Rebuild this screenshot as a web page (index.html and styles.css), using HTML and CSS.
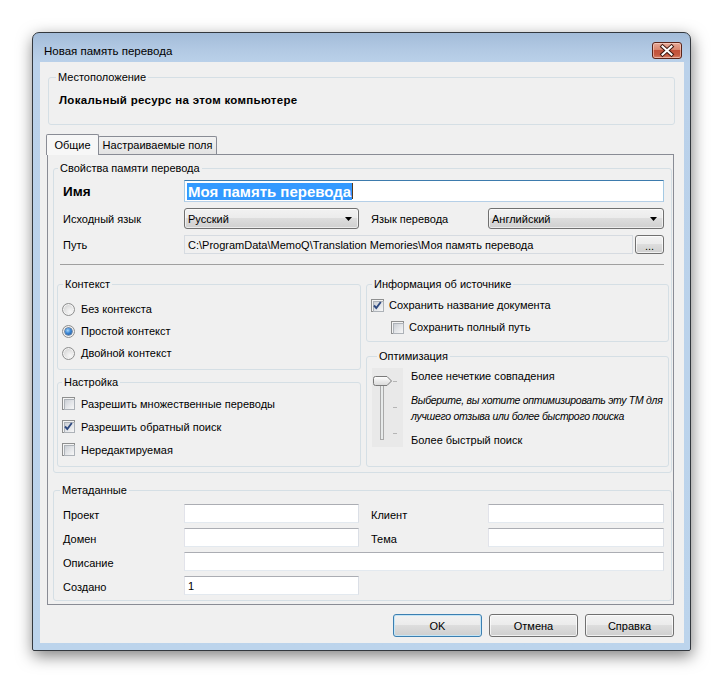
FILE: index.html
```html
<!DOCTYPE html>
<html lang="ru">
<head>
<meta charset="utf-8">
<title>Новая память перевода</title>
<link rel="stylesheet" href="styles.css">
</head>
<body>
<div class="window">
  <div class="titlebar">
    <span class="title">Новая память перевода</span>
    <div class="close">
      <svg width="28" height="15" viewBox="0 0 28 15">
        <path d="M9.5 3.5 L18.5 11.5 M18.5 3.5 L9.5 11.5" stroke="#3d1810" stroke-width="4" stroke-linecap="square"/>
        <path d="M9.5 3.5 L18.5 11.5 M18.5 3.5 L9.5 11.5" stroke="#ffffff" stroke-width="2" stroke-linecap="square"/>
      </svg>
    </div>
  </div>
  <div class="client">
    <fieldset class="group loc">
      <legend>Местоположение</legend>
      <div class="loc-text">Локальный ресурс на этом компьютере</div>
    </fieldset>

    <div class="tabs">
      <div class="tab active">Общие</div>
      <div class="tab">Настраиваемые поля</div>
    </div>

    <div class="panel">
      <fieldset class="group props">
        <legend>Свойства памяти перевода</legend>
        <div class="form">
          <div class="lbl name-lbl">Имя</div>
          <div class="input name-input span4"><span class="sel">Моя память перевода</span><span class="caret"></span></div>

          <div class="lbl">Исходный язык</div>
          <div class="combo"><span>Русский</span><svg class="arrow" width="7" height="4" viewBox="0 0 7 4"><path d="M0 0 H7 L3.5 4 Z" fill="#000"/></svg></div>
          <div class="lbl lbl2">Язык перевода</div>
          <div class="combo"><span>Английский</span><svg class="arrow" width="7" height="4" viewBox="0 0 7 4"><path d="M0 0 H7 L3.5 4 Z" fill="#000"/></svg></div>

          <div class="lbl">Путь</div>
          <div class="path-row span4">
            <div class="input path">C:\ProgramData\MemoQ\Translation Memories\Моя память перевода</div>
            <div class="btn dots">...</div>
          </div>
        </div>
        <div class="sep"></div>
        <div class="cols">
          <div class="col">
            <fieldset class="group ctx">
              <legend>Контекст</legend>
              <div class="opt"><span class="radio"></span>Без контекста</div>
              <div class="opt"><span class="radio on"></span>Простой контекст</div>
              <div class="opt"><span class="radio"></span>Двойной контекст</div>
            </fieldset>
            <fieldset class="group settings">
              <legend>Настройка</legend>
              <div class="opt"><span class="cb"></span>Разрешить множественные переводы</div>
              <div class="opt"><span class="cb on"><svg width="13" height="13" viewBox="0 0 13 13"><path d="M3 6.5 L5.3 9 L9.8 3" fill="none" stroke="#2f4a80" stroke-width="1.9"/></svg></span>Разрешить обратный поиск</div>
              <div class="opt"><span class="cb"></span>Нередактируемая</div>
            </fieldset>
          </div>
          <div class="col">
            <fieldset class="group info">
              <legend>Информация об источнике</legend>
              <div class="opt"><span class="cb on"><svg width="13" height="13" viewBox="0 0 13 13"><path d="M3 6.5 L5.3 9 L9.8 3" fill="none" stroke="#2f4a80" stroke-width="1.9"/></svg></span>Сохранить название документа</div>
              <div class="opt sub"><span class="cb"></span>Сохранить полный путь</div>
            </fieldset>
            <fieldset class="group optim">
              <legend>Оптимизация</legend>
              <div class="optim-body">
                <svg class="slider" width="31" height="79" viewBox="0 0 31 79">
                  <defs>
                    <linearGradient id="thumbg" x1="0" y1="0" x2="0" y2="1">
                      <stop offset="0" stop-color="#ffffff"/>
                      <stop offset="1" stop-color="#d8d8d8"/>
                    </linearGradient>
                  </defs>
                  <rect x="8.5" y="15.5" width="3" height="56" fill="#e7eaea" stroke="#a9a9a9"/>
                  <path d="M21 13.5 H25 M21 39.5 H25 M21 65.5 H25" stroke="#b5b5b5"/>
                  <path d="M3.5 8.5 H15 L19.5 13 L15 17.5 H3.5 Q1.5 17.5 1.5 15.5 V10.5 Q1.5 8.5 3.5 8.5 Z" fill="url(#thumbg)" stroke="#7a7a7a"/>
                </svg>
                <div class="optim-text">
                  <div>Более нечеткие совпадения</div>
                  <div class="hint">Выберите, вы хотите оптимизировать эту ТМ для<br>лучшего отзыва или более быстрого поиска</div>
                  <div class="fast">Более быстрый поиск</div>
                </div>
              </div>
            </fieldset>
          </div>
        </div>
      </fieldset>

      <fieldset class="group meta">
        <legend>Метаданные</legend>
        <div class="form meta-form">
          <div class="lbl">Проект</div>
          <div class="input"></div>
          <div class="lbl lbl2">Клиент</div>
          <div class="input"></div>

          <div class="lbl">Домен</div>
          <div class="input"></div>
          <div class="lbl lbl2">Тема</div>
          <div class="input"></div>

          <div class="lbl">Описание</div>
          <div class="input span4"></div>

          <div class="lbl">Создано</div>
          <div class="input">1</div>
        </div>
      </fieldset>
    </div>

    <div class="buttons">
      <div class="btn default">OK</div>
      <div class="btn">Отмена</div>
      <div class="btn">Справка</div>
    </div>
  </div>
</div>
</body>
</html>
```

FILE: styles.css
```css
* { box-sizing: border-box; }
html, body { margin: 0; padding: 0; }
body {
  width: 724px;
  height: 684px;
  overflow: hidden;
  background: #ffffff;
  font-family: "Liberation Sans", Arial, sans-serif;
  font-size: 11px;
  color: #000;
}

/* window frame */
.window {
  margin: 32px 0 0 32px;
  width: 659px;
  height: 619px;
  border: 1px solid #33383e;
  border-radius: 7px 7px 2px 2px;
  background: linear-gradient(to bottom, #a3bcd9 0, #b3cae4 18px, #bad1ea 30px, #bcd4ec 100%);
  box-shadow: 1px 5px 16px rgba(0, 0, 0, 0.5);
  padding: 0 6px 7px 7px;
  display: flex;
  flex-direction: column;
}
.titlebar {
  height: 29px;
  flex: none;
  display: flex;
  justify-content: space-between;
  align-items: flex-start;
}
.title {
  padding: 11px 0 0 4px;
  font-size: 11.5px;
  line-height: 14px;
  color: #000;
}
.close {
  margin: 9px 2px 0 0;
  width: 30px;
  height: 17px;
  border: 1px solid #5b2419;
  border-radius: 3px;
  background: linear-gradient(to bottom, #e6a998 0, #d9876f 45%, #c2513a 50%, #c65a41 80%, #d8846b 100%);
  box-shadow: inset 0 0 0 1px rgba(255, 220, 210, 0.55);
  display: flex;
  align-items: center;
  justify-content: center;
}

.client {
  flex: 1;
  background: #f0f0f0;
  display: flex;
  flex-direction: column;
}

/* group boxes */
.group {
  margin: 0;
  padding: 0;
  min-width: 0;
  border: 1px solid #d5dfe5;
  border-radius: 3px;
}
.group > legend {
  padding: 0 2px;
  line-height: 14px;
  margin-left: 5px;
}

.loc {
  margin: 8px 9px 0 8px;
  padding-bottom: 17px;
}
.loc > legend { margin-left: 7px; }
.loc-text {
  margin: 9px 0 0 10px;
  font-weight: bold;
  font-size: 11.5px;
  letter-spacing: 0.3px;
  line-height: 14px;
}

/* tabs */
.tabs {
  margin: 9px 0 0 6px;
  height: 20px;
  display: flex;
  align-items: flex-end;
}
.tab {
  height: 18px;
  border: 1px solid #898c95;
  border-bottom: none;
  border-radius: 2px 2px 0 0;
  background: linear-gradient(to bottom, #f2f2f2, #e3e3e3);
  line-height: 17px;
  text-align: center;
  width: 119px;
  margin-left: -1px;
}
.tab.active {
  width: 53px;
  height: 21px;
  margin-left: 0;
  margin-bottom: -1px;
  line-height: 20px;
  background: #f7f7f7;
  position: relative;
  z-index: 1;
}

.panel {
  margin-left: 7px;
  width: 627px;
  height: 451px;
  border: 1px solid #898c95;
  background: #f0f0f0;
}

.props {
  margin: 6px 1px 0 5px;
  padding-bottom: 5px;
}
.props > legend { margin-left: 4px; }

.form {
  margin: 5px 0 0 9px;
  display: grid;
  grid-template-columns: 121px 175px 129px 176px;
  grid-template-rows: 22px 21px 19px;
  row-gap: 6px;
}
.lbl {
  display: flex;
  align-items: center;
  white-space: nowrap;
}
.lbl2 { padding-left: 12px; }
.name-lbl {
  font-weight: bold;
  font-size: 13.5px;
}
.span4 { grid-column: 2 / 5; }

.input {
  background: #fff;
  border: 1px solid;
  border-color: #abadb3 #dbdfe6 #e3e9ef #e2e3ea;
  padding-left: 3px;
  display: flex;
  align-items: center;
  white-space: nowrap;
  overflow: hidden;
}
.name-input {
  border-color: #3d7bad #a4c9e3 #b5cfe7 #a4c9e3;
  padding-left: 2px;
}
.sel {
  background: #3399ff;
  color: #fff;
  font-weight: bold;
  font-size: 15px;
  line-height: 17px;
  padding: 0 1px;
}
.caret {
  width: 1px;
  height: 16px;
  background: #5a3a1a;
}

.combo {
  border: 1px solid #707070;
  border-radius: 3px;
  background: linear-gradient(to bottom, #f2f2f2 0%, #ebebeb 50%, #dddddd 50%, #cfcfcf 100%);
  box-shadow: inset 0 0 0 1px rgba(255, 255, 255, 0.6);
  display: flex;
  align-items: center;
  justify-content: space-between;
  padding: 0 6px 0 3px;
}
.arrow { display: block; }

.path-row {
  display: flex;
  gap: 2px;
}
.path {
  flex: 1;
  background: #f0f0f0;
  border-color: #d6dbe1;
}
.btn {
  border: 1px solid #707070;
  border-radius: 3px;
  background: linear-gradient(to bottom, #f2f2f2 0%, #ebebeb 50%, #dddddd 50%, #cfcfcf 100%);
  box-shadow: inset 0 0 0 1px rgba(255, 255, 255, 0.7);
  display: flex;
  align-items: center;
  justify-content: center;
}
.dots {
  width: 29px;
  align-items: flex-end;
  line-height: 12px;
  padding-bottom: 1px;
}

.sep {
  margin: 10px 0 0 6px;
  width: 604px;
  height: 1px;
  background: #a0a0a0;
}

.cols {
  margin: 12px 0 0 3px;
  display: flex;
  gap: 5px;
}
.col {
  display: flex;
  flex-direction: column;
}
.col:first-child { width: 304px; }
.col:last-child { width: 303px; }

.opt {
  display: flex;
  align-items: center;
  gap: 6px;
  padding-left: 4px;
  white-space: nowrap;
}
.ctx { padding: 7px 0 5px; }
.ctx .opt { height: 22px; }
.settings {
  margin-top: 5px;
  padding: 3px 0 5px;
}
.settings > legend { margin-left: 4px; }
.settings .opt { height: 23px; }
.info { padding: 3px 0 3px; }
.info .opt { height: 22px; gap: 5px; }
.info .opt.sub { padding-left: 24px; }

.radio {
  width: 13px;
  height: 13px;
  border-radius: 50%;
  border: 1px solid #8e8f8f;
  background: radial-gradient(circle at 65% 70%, #f8f8f8 0, #e4e4e4 45%, #c9c9c9 100%);
  box-shadow: inset 0 0 0 1px #f4f4f4;
  position: relative;
  flex: none;
}
.radio.on::after {
  content: "";
  position: absolute;
  left: 2px;
  top: 2px;
  width: 7px;
  height: 7px;
  border-radius: 50%;
  background: radial-gradient(circle at 40% 35%, #a8d8fb 0, #3b86d4 45%, #1c4c8a 100%);
  box-shadow: 0 0 0 0.5px #1b3f6e;
}

.cb {
  width: 13px;
  height: 13px;
  border: 1px solid #8e8f8f;
  background: #f4f4f4;
  padding: 1px;
  position: relative;
  flex: none;
}
.cb::before {
  content: "";
  display: block;
  width: 9px;
  height: 9px;
  border: 1px solid #adb2b8;
  background: linear-gradient(135deg, #cbcfd5 0, #e3e5e8 50%, #f7f7f7 100%);
}
.cb svg {
  position: absolute;
  left: -1px;
  top: -1px;
}

.optim {
  margin-top: 7px;
  padding: 5px 0 18px 5px;
}
.optim-body {
  display: flex;
  gap: 8px;
}
.slider {
  display: block;
  flex: none;
  background: #e9e9e9;
}
.optim-text {
  line-height: 16px;
  white-space: nowrap;
}
.hint {
  font-style: italic;
  font-size: 10.5px;
  letter-spacing: -0.3px;
  margin-top: 8px;
}
.fast { margin-top: 8px; }

.meta {
  margin: 10px 1px 0 5px;
  padding: 7px 0 5px;
}
.meta > legend { margin-left: 6px; }
.meta-form {
  margin-top: 0;
  grid-template-rows: 19px 19px 19px 19px;
  row-gap: 5px;
}
.meta-form .lbl { padding-top: 2px; }
.meta-form .lbl2 { padding-top: 2px; }

.buttons {
  margin: 9px 10px 0 0;
  display: flex;
  justify-content: flex-end;
  gap: 7px;
}
.buttons .btn {
  width: 89px;
  height: 23px;
}
.btn.default {
  border-color: #3c7fb1;
  box-shadow: inset 0 0 0 1px #c4e5f6;
}
```
